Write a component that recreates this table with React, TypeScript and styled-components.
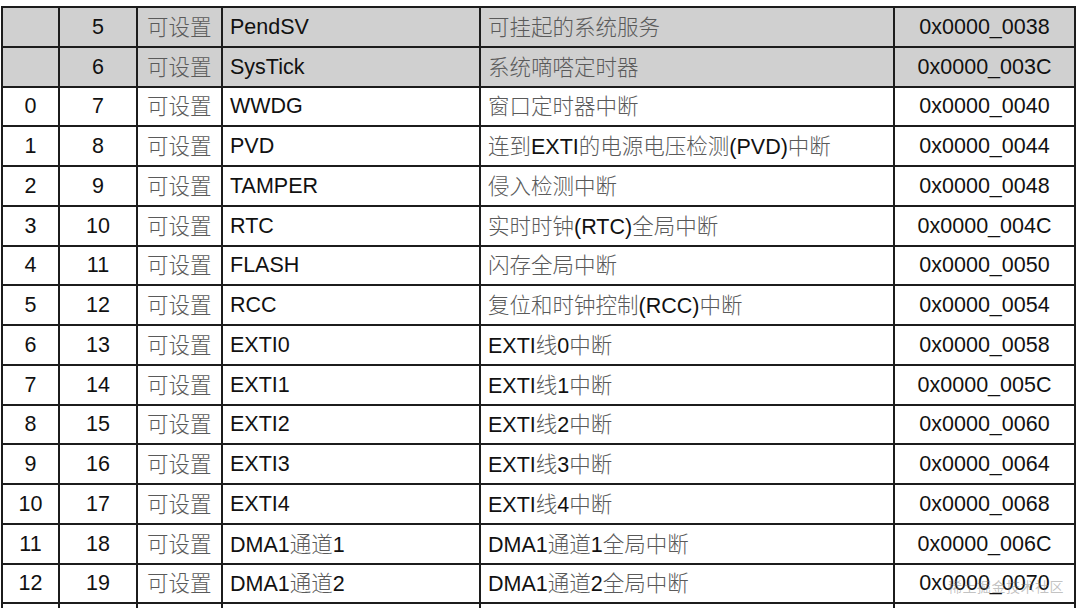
import React from "react";
import styled, { createGlobalStyle } from "styled-components";

const GlobalStyle = createGlobalStyle`
  html, body {
    margin: 0;
    padding: 0;
    background: #ffffff;
    overflow: hidden;
    height: 608px;
  }
`;

const Page = styled.div`
  position: relative;
  width: 1078px;
  height: 608px;
  padding: 6px 0 0 1px;
  box-sizing: border-box;
  overflow: hidden;
`;

const Table = styled.table`
  width: 1073px;
  table-layout: fixed;
  border-collapse: collapse;
  font-family: "Liberation Sans", Arial, "Noto Sans CJK SC", sans-serif;
  font-size: 21.5px;
  color: #111;
`;

const Row = styled.tr<{ $shaded?: boolean }>`
  height: 39.75px;
  background: ${(p) => (p.$shaded ? "#d0d0d0" : "#ffffff")};
`;

const Cell = styled.td<{ $align?: "left" | "center"; $pad?: number }>`
  border: 2px solid #1c1c1c;
  padding: 0 0 0 ${(p) => p.$pad ?? 0}px;
  text-align: ${(p) => p.$align ?? "left"};
  white-space: nowrap;
  overflow: hidden;
  line-height: 24px;
  vertical-align: middle;
`;

const Han = styled.span`
  font-family: "Noto Sans CJK SC", sans-serif;
  font-weight: 300;
  color: #5a5a5a;
`;

const Watermark = styled.div`
  position: absolute;
  right: 14px;
  top: 576px;
  font-family: "Noto Sans CJK SC", sans-serif;
  font-size: 14px;
  letter-spacing: 0.5px;
  color: rgba(120, 120, 120, 0.45);
  pointer-events: none;
`;

type Item = [string, string, string, string, string, boolean?];

const rows: Item[] = [
  ["", "5", "PendSV", "可挂起的系统服务", "0x0000_0038", true],
  ["", "6", "SysTick", "系统嘀嗒定时器", "0x0000_003C", true],
  ["0", "7", "WWDG", "窗口定时器中断", "0x0000_0040"],
  ["1", "8", "PVD", "连到EXTI的电源电压检测(PVD)中断", "0x0000_0044"],
  ["2", "9", "TAMPER", "侵入检测中断", "0x0000_0048"],
  ["3", "10", "RTC", "实时时钟(RTC)全局中断", "0x0000_004C"],
  ["4", "11", "FLASH", "闪存全局中断", "0x0000_0050"],
  ["5", "12", "RCC", "复位和时钟控制(RCC)中断", "0x0000_0054"],
  ["6", "13", "EXTI0", "EXTI线0中断", "0x0000_0058"],
  ["7", "14", "EXTI1", "EXTI线1中断", "0x0000_005C"],
  ["8", "15", "EXTI2", "EXTI线2中断", "0x0000_0060"],
  ["9", "16", "EXTI3", "EXTI线3中断", "0x0000_0064"],
  ["10", "17", "EXTI4", "EXTI线4中断", "0x0000_0068"],
  ["11", "18", "DMA1通道1", "DMA1通道1全局中断", "0x0000_006C"],
  ["12", "19", "DMA1通道2", "DMA1通道2全局中断", "0x0000_0070"],
];

// chinese runs get the lighter grey look of the original pdf
const Mixed = ({ text }: { text: string }) => (
  <>
    {text.split(/([\u4e00-\u9fff]+)/).map((part, i) =>
      /[\u4e00-\u9fff]/.test(part) ? <Han key={i}>{part}</Han> : part
    )}
  </>
);

const App = () => {
  return (
    <Page>
      <GlobalStyle />
      <Table>
        <colgroup>
          <col style={{ width: 57 }} />
          <col style={{ width: 78 }} />
          <col style={{ width: 85 }} />
          <col style={{ width: 258 }} />
          <col style={{ width: 414 }} />
          <col style={{ width: 181 }} />
        </colgroup>
        <tbody>
          {rows.map(([pos, prio, name, desc, addr, shaded]) => (
            <Row key={prio} $shaded={shaded}>
              <Cell $align="center">{pos}</Cell>
              <Cell $align="center">{prio}</Cell>
              <Cell $pad={9}>
                <Han>可设置</Han>
              </Cell>
              <Cell $pad={7}>
                <Mixed text={name} />
              </Cell>
              <Cell $pad={7}>
                <Mixed text={desc} />
              </Cell>
              <Cell $align="center">{addr}</Cell>
            </Row>
          ))}
          {/* next row is cut off by the screenshot edge */}
          <Row>
            <Cell />
            <Cell />
            <Cell />
            <Cell />
            <Cell />
            <Cell />
          </Row>
        </tbody>
      </Table>
      <Watermark>稀土掘金技术社区</Watermark>
    </Page>
  );
};

export default App;
